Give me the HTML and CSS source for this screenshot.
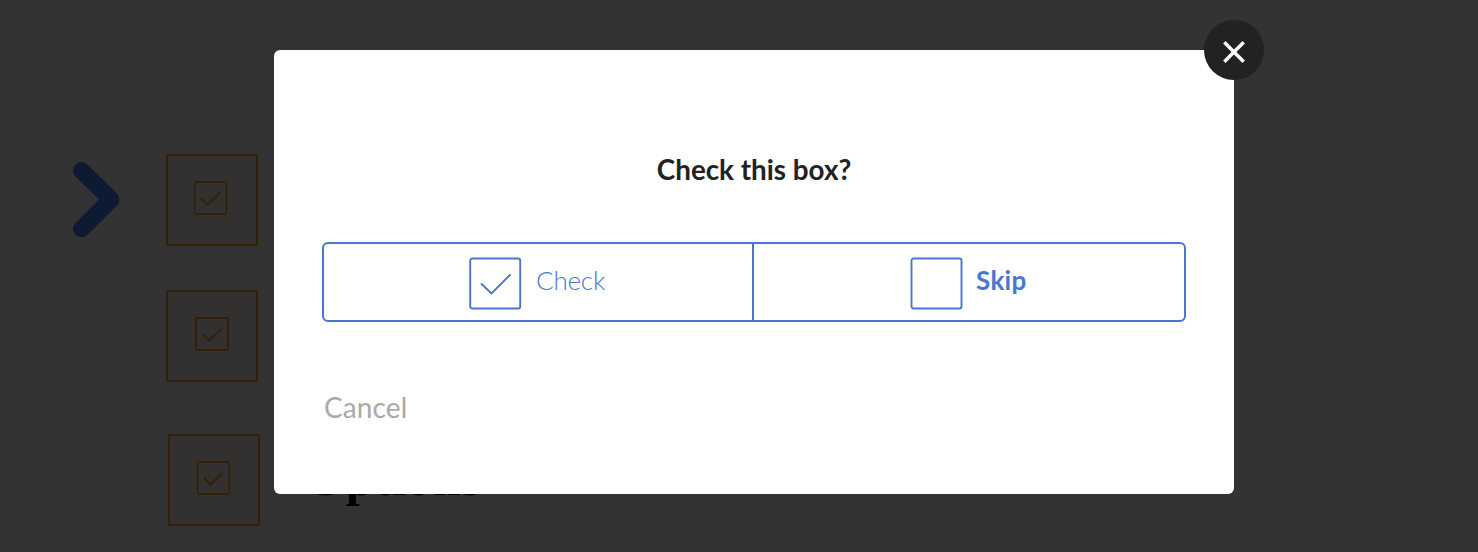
FILE: index.html
```html
<!DOCTYPE html>
<html lang="en">
<head>
<meta charset="utf-8">
<title>Check this box?</title>
<link rel="stylesheet" href="styles.css">
</head>
<body>
<svg class="symbols" aria-hidden="true">
  <symbol id="checkbox" viewBox="0 0 34 34"><rect x="1" y="1" width="32" height="32" rx="2"/><path d="M7.500 17 14 23.500 26.500 11.500"/></symbol>
</svg>
<main class="canvas">
  <svg class="arrow" viewBox="0 0 48 78"><path d="M9.500 9.500 39 38.500 9.500 68"/></svg>
  <div class="field field-one"><svg><use href="#checkbox"/></svg></div>
  <div class="field field-two"><svg><use href="#checkbox"/></svg></div>
  <div class="field field-three"><svg><use href="#checkbox"/></svg></div>
  <div class="document-text">Options</div>
</main>
<section class="dialog" role="dialog" aria-modal="true">
  <button class="close" aria-label="Close"><svg viewBox="0 0 60 60"><path d="M20.300 22.300 39.700 41.700M39.700 22.300 20.300 41.700"/></svg></button>
  <h1>Check this box?</h1>
  <div class="choices">
    <button class="choice choice-check"><svg viewBox="0 0 52 52"><rect x="1.200" y="1.500" width="50" height="50" rx="2"/><path d="M12 26.500 22.500 36.500 41.500 17.500"/></svg><span>Check</span></button>
    <button class="choice choice-skip"><svg viewBox="0 0 52 52"><rect x="1.500" y="1.500" width="50" height="50" rx="2"/></svg><span>Skip</span></button>
  </div>
  <button class="cancel">Cancel</button>
</section>
</body>
</html>
```
FILE: styles.css
```css
* { box-sizing: border-box; }
body { margin: 0; height: 552px; overflow: hidden; background: #333; font-family: Lato, sans-serif; padding: 50px 0 0 274px; }
button { border: 0; margin: 0; padding: 0; background: none; font: inherit; }
svg { fill: none; display: block; overflow: visible; }
.symbols { position: absolute; width: 0; height: 0; }
.canvas { position: absolute; inset: 0; }
.arrow { position: absolute; left: 72px; top: 161px; width: 48px; height: 78px; stroke: #0e1a33; stroke-width: 17; stroke-linecap: round; stroke-linejoin: round; }
.field { position: absolute; width: 92px; height: 92px; border: 2px solid #332008; background: #33312f; }
.field svg { width: 34px; height: 34px; margin: 25px 0 0 25px; stroke: #332008; stroke-width: 2; }
.field-one { left: 166px; top: 154px; }
.field-one use, .field-three use { transform: translateX(0.5px); }
.field-two { left: 166px; top: 290px; }
.field-two svg { margin-left: 27px; }
.field-three { left: 168px; top: 434px; }
.field-three svg { margin-left: 26px; }
.document-text { position: absolute; left: 306px; top: 449px; font: bold 50px/58px "Liberation Serif", serif; letter-spacing: 0.9px; color: #000; }
.dialog { position: relative; width: 960px; height: 444px; padding: 102px 48px 0; background: #fff; border-radius: 6px; }
.close { position: absolute; right: -30px; top: -30px; width: 60px; height: 60px; border-radius: 50%; background: #222; }
.close svg { stroke: #fff; stroke-width: 3.4; }
h1 { margin: 0; color: #222; font-size: 27.8px; line-height: 36px; font-weight: 700; text-align: center; }
.choices { display: flex; height: 80px; margin-top: 54px; border: 2px solid #4876d2; border-radius: 6px; }
.choice { display: flex; color: #4876d2; font-size: 26px; line-height: 32px; padding-top: 13px; }
.choice svg { width: 52px; height: 52px; stroke: #4876d2; stroke-width: 1.9; margin-right: 15px; }
.choice span { margin-top: 7px; }
.choice-check { width: 430px; padding-left: 145px; border-right: 2px solid #4876d2; font-weight: 300; }
.choice-check span { letter-spacing: -0.2px; }
.choice-skip { width: 430px; padding-left: 156px; font-weight: 700; }
.choice-skip svg { margin-right: 14px; }
.choice-skip span { letter-spacing: 0.3px; }
.cancel { display: block; margin: 67px 0 0 2px; color: #aaa; font-size: 28px; line-height: 36px; letter-spacing: 0.1px; }
```
